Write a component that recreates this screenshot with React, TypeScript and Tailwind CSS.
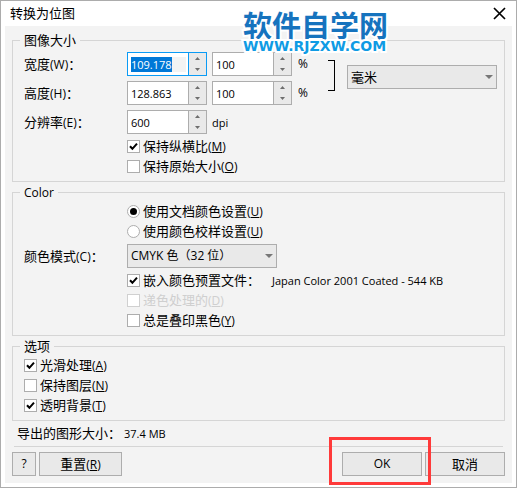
import { useEffect, useRef } from 'react';
import type { ReactNode } from 'react';

const Key = ({ k, underline = true }: { k: string; underline?: boolean }) => (
  <span className="text-xs">({underline ? <u className="underline-offset-1">{k}</u> : k})</span>
);

const Group = ({ title, className = '', children }: { title: ReactNode; className?: string; children: ReactNode }) => (
  <fieldset className={`min-w-0 border border-[#d5d5d5] px-[11px] pb-[5px] ${className}`}>
    <legend className="-ml-1 h-[17px] px-1 leading-[17px]">{title}</legend>
    {children}
  </fieldset>
);

const Arrow = ({ up = false }: { up?: boolean }) => (
  <svg width="5" height="3" viewBox="0 0 5 3" fill="#6d6d6d" aria-hidden="true">
    <path d={up ? 'M0 3L2.5 0L5 3Z' : 'M0 0L2.5 3L5 0Z'} />
  </svg>
);

const Spinner = ({ id, label, value, active = false }: { id: string; label?: string; value: string; active?: boolean }) => {
  const ref = useRef<HTMLInputElement>(null);

  useEffect(() => {
    if (active) {
      ref.current?.focus();
      ref.current?.select();
    }
  }, [active]);

  return (
    <div className={`flex h-6 w-20 border bg-white ${active ? 'border-[#0a9bf5]' : 'border-[#adadad]'}`}>
      <div className="flex min-w-0 flex-1 items-center pr-0.5 pl-[3px]">
        <input
          ref={ref}
          id={id}
          aria-label={label}
          defaultValue={value}
          className={`h-[15px] w-full min-w-0 text-[11px] leading-[15px] outline-none selection:bg-[#0078d7] selection:text-white ${active ? 'bg-[#f3f3f3]' : ''}`}
        />
      </div>
      <div className={`flex w-[18px] flex-col border-l bg-[#e9e9e9] ${active ? 'border-[#0a9bf5]' : 'border-[#adadad]'}`}>
        <button type="button" aria-label="增加" className="flex flex-1 items-center justify-center">
          <Arrow up />
        </button>
        <button type="button" aria-label="减少" className="flex flex-1 items-center justify-center">
          <Arrow />
        </button>
      </div>
    </div>
  );
};

const Check = ({ children, checked = false, disabled = false }: { children: ReactNode; checked?: boolean; disabled?: boolean }) => (
  <label className={`flex h-[19px] items-center gap-[3px] ${disabled ? 'text-[#cfcfcf]' : ''}`}>
    <span className="grid size-[13px] shrink-0">
      <input
        type="checkbox"
        defaultChecked={checked}
        disabled={disabled}
        className={`peer col-start-1 row-start-1 size-[13px] appearance-none border bg-white ${disabled ? 'border-[#d0d0d0]' : 'border-[#adadad]'}`}
      />
      <svg viewBox="0 0 13 13" className="pointer-events-none invisible col-start-1 row-start-1 size-[13px] peer-checked:visible" fill="none" stroke="#000" strokeWidth="2">
        <path d="M3 6.2L5.4 8.8L10 3.6" />
      </svg>
    </span>
    <span className="whitespace-nowrap">{children}</span>
  </label>
);

const Radio = ({ children, checked = false }: { children: ReactNode; checked?: boolean }) => (
  <label className="flex h-[19px] items-center gap-[3px]">
    <span className="grid size-[13px] shrink-0">
      <input
        type="radio"
        name="color-source"
        defaultChecked={checked}
        className="peer col-start-1 row-start-1 size-[13px] appearance-none rounded-full border border-[#adadad] bg-white"
      />
      <span className="pointer-events-none invisible col-start-1 row-start-1 m-[3px] size-[7px] rounded-full bg-black peer-checked:visible" />
    </span>
    <span className="whitespace-nowrap">{children}</span>
  </label>
);

const Combo = ({ id, label, value, className }: { id: string; label?: string; value: string; className: string }) => (
  <div className={`grid h-6 items-center ${className}`}>
    <select
      id={id}
      aria-label={label}
      className="col-start-1 row-start-1 h-6 w-full appearance-none border border-[#adadad] bg-[#e9e9e9] pl-[3px] leading-5"
    >
      <option>{value}</option>
    </select>
    <svg width="8" height="4" viewBox="0 0 8 4" fill="#777" className="pointer-events-none col-start-1 row-start-1 mr-1 justify-self-end" aria-hidden="true">
      <path d="M0 0H8L4 4Z" />
    </svg>
  </div>
);

const btn = 'h-6 border border-[#adadad] bg-[#e9e9e9]';

const App = () => (
  <div className="relative border border-[#acacac] bg-white px-1 pb-1 font-['Open_Sans','Noto_Sans_CJK_SC',sans-serif] text-[13px] leading-[19px] text-black">
    <header className="flex h-[25px] items-center justify-between pr-1.5 pl-[5px]">
      <h1>转换为位图</h1>
      <button type="button" aria-label="关闭">
        <svg width="13" height="13" viewBox="0 0 13 13" fill="none" stroke="#000" strokeWidth="1.7">
          <path d="M1 1L12 12M12 1L1 12" />
        </svg>
      </button>
    </header>

    <main className="bg-[#f3f3f3] px-[7px] pt-1.5 pb-[7px]">
      <Group title="图像大小">
        <div className="flex flex-col gap-[5px] pt-[3px]">
          <div className="flex items-start">
            <div className="grid grid-cols-[103px_80px_85px_auto] items-center gap-y-[5px]">
              <label htmlFor="width">宽度<Key k="W" underline={false} />：</label>
              <Spinner id="width" value="109.178" active />
              <div className="ml-[5px]"><Spinner id="width-pct" label="宽度百分比" value="100" /></div>
              <span className="ml-1.5 text-xs">%</span>
              <label htmlFor="height">高度<Key k="H" underline={false} />：</label>
              <Spinner id="height" value="128.863" />
              <div className="ml-[5px]"><Spinner id="height-pct" label="高度百分比" value="100" /></div>
              <span className="ml-1.5 text-xs">%</span>
            </div>
            <div className="mt-2 ml-5 h-[31px] w-[7px] border-y border-r border-black" />
            <Combo id="unit" label="单位" value="毫米" className="mt-[13px] mr-[-4px] ml-3 flex-1" />
          </div>
          <div className="grid grid-cols-[103px_80px_auto] items-center">
            <label htmlFor="dpi">分辨率<Key k="E" underline={false} />：</label>
            <Spinner id="dpi" value="600" />
            <span className="ml-[5px] text-[11px]">dpi</span>
          </div>
        </div>
        <div className="mt-[3px] ml-[103px] flex flex-col gap-px">
          <Check checked>保持纵横比<Key k="M" /></Check>
          <Check>保持原始大小<Key k="O" /></Check>
        </div>
      </Group>

      <Group title={<span className="text-xs">Color</span>} className="mt-0.5">
        <div className="ml-[103px] flex flex-col gap-px pt-px">
          <Radio checked>使用文档颜色设置<Key k="U" /></Radio>
          <Radio>使用颜色校样设置<Key k="U" /></Radio>
        </div>
        <div className="my-[3px] grid grid-cols-[103px_auto] items-center">
          <label htmlFor="mode">颜色模式<Key k="C" underline={false} />：</label>
          <Combo id="mode" value="CMYK 色（32 位）" className="w-[150px] text-xs" />
        </div>
        <div className="ml-[103px] flex flex-col gap-px">
          <div className="flex items-center">
            <Check checked>嵌入颜色预置文件：</Check>
            <span className="ml-3 text-[11px] whitespace-nowrap">Japan Color 2001 Coated - 544 KB</span>
          </div>
          <Check disabled>递色处理的<Key k="D" /></Check>
          <Check>总是叠印黑色<Key k="Y" /></Check>
        </div>
      </Group>

      <Group title="选项" className="mt-0.5">
        <div className="flex flex-col gap-px pt-px">
          <Check checked>光滑处理<Key k="A" /></Check>
          <Check>保持图层<Key k="N" /></Check>
          <Check checked>透明背景<Key k="T" /></Check>
        </div>
      </Group>

      <p className="flex h-[25px] items-center pl-[5px]">
        导出的图形大小：<span className="ml-[3px] text-[11px]">37.4 MB</span>
      </p>
      <hr className="mx-0.5 border-[#d5d5d5]" />

      <footer className="mt-[5px] flex gap-[3px]">
        <button type="button" className={`${btn} w-6 text-xs`}>?</button>
        <button type="button" className={`${btn} w-[83px]`}>重置<Key k="R" /></button>
        <div className="relative ml-auto">
          <button type="button" className={`${btn} w-20 text-xs`}>OK</button>
          <div className="pointer-events-none absolute -top-[15px] -right-[9px] -bottom-[9px] -left-[13px] z-10 border-3 border-[#ff3a3a]" />
        </div>
        <button type="button" className={`${btn} w-20`}>取消</button>
      </footer>
    </main>

    <div className="pointer-events-none absolute top-1.5 left-[242px] whitespace-nowrap [-webkit-text-stroke:4px_white] [paint-order:stroke_fill]">
      <div className="font-['Noto_Sans_CJK_SC',sans-serif] text-[29px] leading-[34px] font-bold text-[#1673be]">软件自学网</div>
      <div className="font-['DejaVu_Sans',sans-serif] text-[14px] leading-[10px] font-bold text-[#0f9be4]">WWW.RJZXW.COM</div>
    </div>
  </div>
);

export default App;
